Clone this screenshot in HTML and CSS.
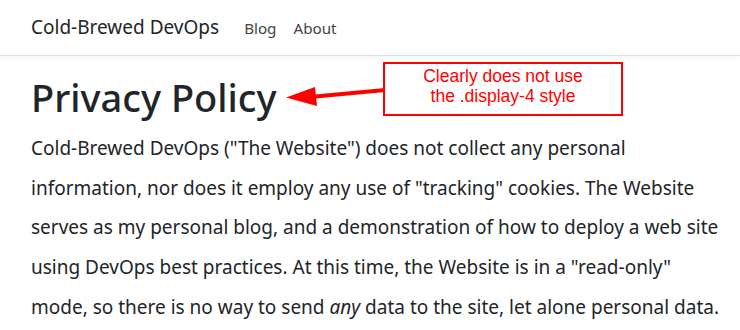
FILE: index.html
```html
<!DOCTYPE html>
<html lang="en">
<head>
 <meta charset="UTF-8" />
 <title>Privacy Policy - Cold-Brewed DevOps</title>
 <link rel="stylesheet" href="styles.css">
</head>
<body>
 <nav class="navbar">
   <a class="brand" href="#">Cold-Brewed DevOps</a>
   <a class="nav-link" href="#">Blog</a>
   <a class="nav-link" href="#">About</a>
 </nav>

 <main class="content">
   <h1 class="title">Privacy Policy</h1>
   <p class="body-text">Cold-Brewed DevOps ("The Website") does not collect any personal information, nor does it employ any use of "tracking" cookies. The Website serves as my personal blog, and a demonstration of how to deploy a web site using DevOps best practices. At this time, the Website is in a "read-only" mode, so there is no way to send <em>any</em> data to the site, let alone personal data.</p>

   <!-- annotation -->
   <svg class="arrow" width="100" height="22" viewBox="0 0 100 22">
     <line x1="99" y1="4" x2="24" y2="11" stroke="#ff0000" stroke-width="4" />
     <polygon points="0,11.5 29,1 31,20" fill="#ff0000" />
   </svg>
   <div class="note">Clearly does not use<br>the .display-4 style</div>
 </main>
</body>
</html>
```
FILE: styles.css
```css
html {
  overflow: hidden;
}

body {
  margin: 0;
  font-family: 'Noto Sans', sans-serif;
  color: #212529;
  background: #fff;
}

a {
  text-decoration: none;
}

.navbar {
  display: flex;
  align-items: center;
  height: 55px;
  padding: 0 31px;
  border-bottom: 1px solid #dcdcdc;
  box-shadow: 0 2px 4px rgba(0,0,0,0.04);
}

.brand {
  font-size: 19px;
  color: #212529;
  margin-right: 25px;
  margin-top: -1px;
}

.nav-link {
  font-size: 15.2px;
  color: #444;
  margin-right: 17px;
}

.content {
  position: relative;
  padding: 0 20px 0 31px;
}

.title {
  margin: 0;
  padding-top: 14px;
  font-size: 38px;
  font-weight: 500;
  line-height: 54px;
}

.body-text {
  margin: 5px 0 0;
  font-size: 19px;
  line-height: 39.7px;
}

.arrow {
  position: absolute;
  left: 286px;
  top: 30px;
}

.note {
  position: absolute;
  left: 383px;
  top: 6px;
  width: 236px;
  height: 47px;
  border: 2px solid #ff0000;
  color: #ff0000;
  font-family: 'Liberation Sans', Arial, sans-serif;
  font-size: 17.5px;
  line-height: 19.5px;
  text-align: center;
  padding-top: 3px;
  box-sizing: content-box;
}
```
